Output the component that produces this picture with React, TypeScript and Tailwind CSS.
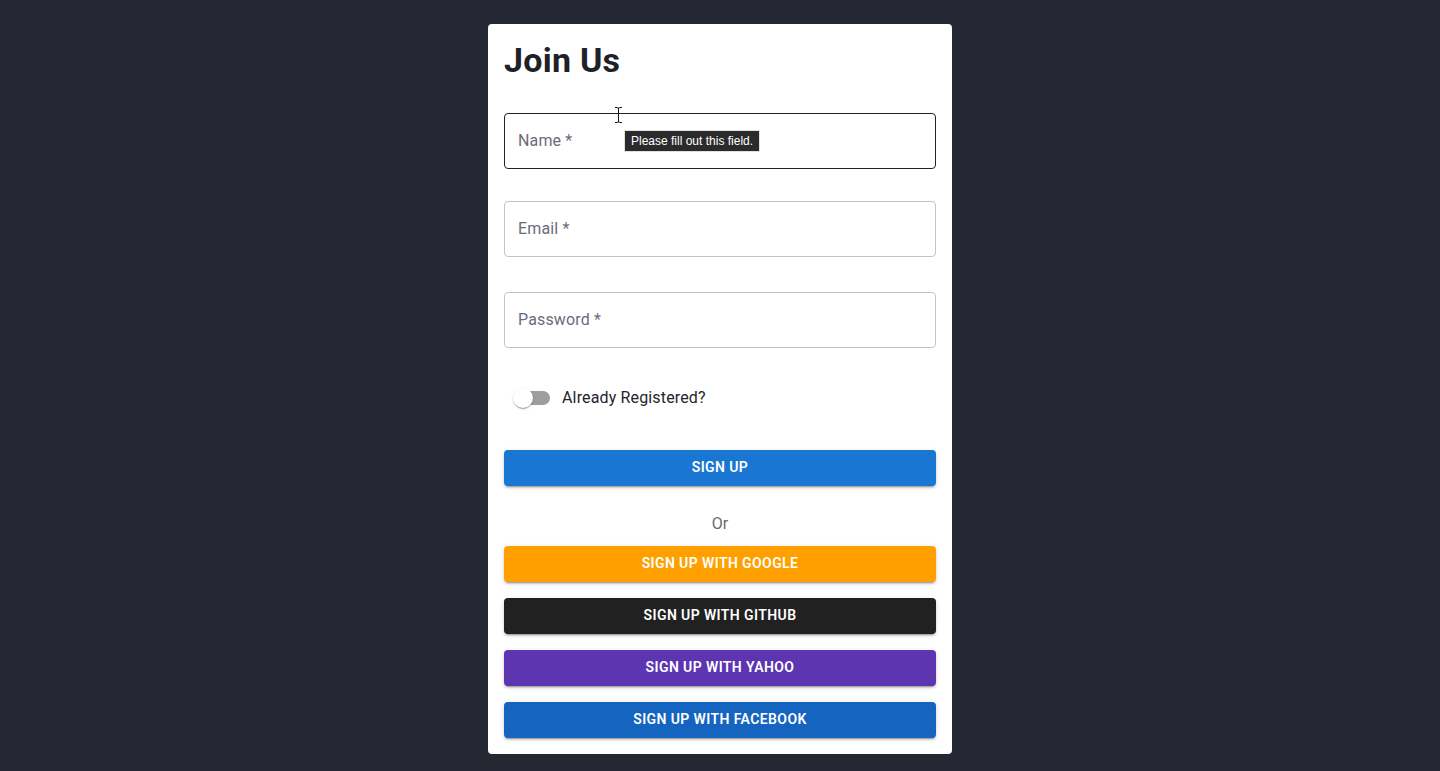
import React from "react";

const btn =
  "w-full h-9 pb-[1px] rounded-[4px] text-white text-[14px] font-semibold uppercase tracking-[0.4px] flex items-center justify-center shadow-[0px_3px_1px_-2px_rgba(0,0,0,0.2),0px_2px_2px_0px_rgba(0,0,0,0.14),0px_1px_5px_0px_rgba(0,0,0,0.12)]";

export default function App() {
  return (
    <div
      className="min-h-[771px] w-full bg-[#252832] flex justify-center pt-6"
      style={{ fontFamily: "Roboto, 'Liberation Sans', sans-serif" }}
    >
      <div className="w-[464px] h-[730px] bg-white rounded-[4px] p-4 flex flex-col">
        <h1 className="text-[34px] leading-[40px] font-bold text-[#1f2129] tracking-[0.25px]">
          Join Us
        </h1>

        <div className="relative mt-[33px] h-14 rounded-[4px] border border-[#222] flex items-center px-[13px]">
          <span className="text-[16px] tracking-[0.15px] text-[#6b6b7b]">Name *</span>
          <div
            className="absolute left-[119px] top-[16px] h-[22px] px-[6px] bg-[#2b2b2b] border border-[#e0e0e0] flex items-center text-white text-[12px]"
            style={{ fontFamily: "'Liberation Sans', Arial, sans-serif" }}
          >
            Please fill out this field.
          </div>
          <svg
            className="absolute left-[109px] top-[-7px]"
            width="9"
            height="16"
            viewBox="0 0 9 16"
          >
            <path
              d="M1 0.5h2.5M5.5 0.5h2.5M4.5 1v14M1 15.5h2.5M5.5 15.5h2.5M3.5 1h2M3.5 15h2"
              stroke="#111"
              strokeWidth="1"
              fill="none"
            />
          </svg>
        </div>

        <div className="mt-8 h-14 rounded-[4px] border border-[#c4c4c4] flex items-center px-[13px]">
          <span className="text-[16px] tracking-[0.15px] text-[#6b6b7b]">Email *</span>
        </div>

        <div className="mt-[35px] h-14 rounded-[4px] border border-[#c4c4c4] flex items-center px-[13px]">
          <span className="text-[16px] tracking-[0.15px] text-[#6b6b7b]">Password *</span>
        </div>

        <div className="mt-[31px] h-[38px] flex items-center">
          <div className="relative w-[58px] h-[38px] shrink-0">
            <div className="absolute left-3 top-3 w-[34px] h-[14px] rounded-full bg-[#9e9e9e]" />
            <div className="absolute left-[9px] top-[9px] w-5 h-5 rounded-full bg-white shadow-[0px_2px_1px_-1px_rgba(0,0,0,0.2),0px_1px_1px_0px_rgba(0,0,0,0.14),0px_1px_3px_0px_rgba(0,0,0,0.12)]" />
          </div>
          <span className="text-[16px] tracking-[0.15px] text-[#23252d]">Already Registered?</span>
        </div>

        <div className={`mt-[33px] bg-[#1976d2] ${btn}`}>Sign Up</div>

        <div className="mt-[28px] text-center text-[16px] leading-[20px] tracking-[0.15px] text-[#6a6a6a]">
          Or
        </div>

        <div className={`mt-[12px] bg-[#ffa000] ${btn}`}>Sign up with Google</div>
        <div className={`mt-4 bg-[#212121] ${btn}`}>Sign up with GitHub</div>
        <div className={`mt-4 bg-[#5e35b1] ${btn}`}>Sign up with Yahoo</div>
        <div className={`mt-4 bg-[#1565c0] ${btn}`}>Sign up with Facebook</div>
      </div>
    </div>
  );
}
